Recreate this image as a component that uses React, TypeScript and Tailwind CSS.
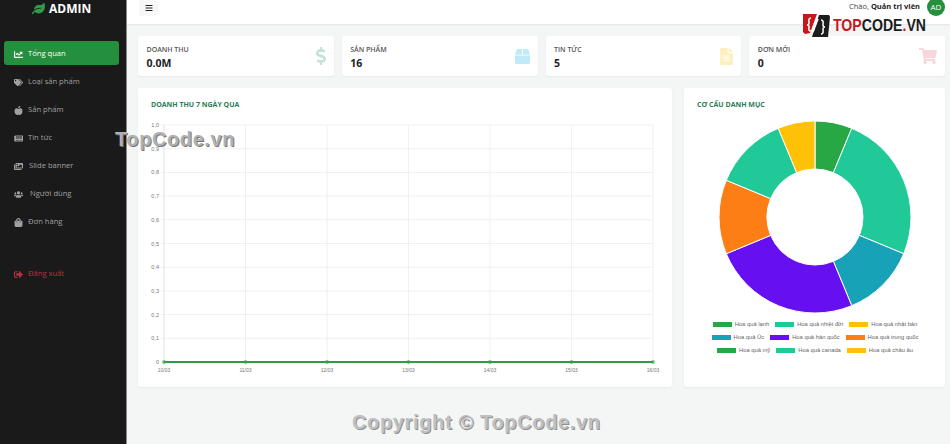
import {
  FaAppleAlt,
  FaBars,
  FaBox,
  FaChartLine,
  FaDollarSign,
  FaFileAlt,
  FaImages,
  FaLeaf,
  FaNewspaper,
  FaShoppingBag,
  FaShoppingCart,
  FaSignOutAlt,
  FaTags,
  FaUsers,
} from "react-icons/fa";

const navItems = [
  { label: "Tổng quan", icon: FaChartLine, active: true, gap: "gap-[5px]" },
  { label: "Loại sản phẩm", icon: FaTags, gap: "gap-[5px]" },
  { label: "Sản phẩm", icon: FaAppleAlt, gap: "gap-[5px]" },
  { label: "Tin tức", icon: FaNewspaper, gap: "gap-[5px]" },
  { label: "Slide banner", icon: FaImages, gap: "gap-[6px]" },
  { label: "Người dùng", icon: FaUsers, gap: "gap-[7px]" },
  { label: "Đơn hàng", icon: FaShoppingBag, gap: "gap-[5px]" },
];

const stats = [
  { label: "DOANH THU", value: "0.0M", icon: FaDollarSign, color: "text-[18px] -mr-[4px] text-[#c3e3d5]" },
  { label: "SẢN PHẨM", value: "16", icon: FaBox, color: "text-[15px] text-[#bfeaf7]" },
  { label: "TIN TỨC", value: "5", icon: FaFileAlt, color: "text-[17px] -mr-[2px] text-[#fdf0c0]" },
  { label: "ĐƠN MỚI", value: "0", icon: FaShoppingCart, color: "text-[18px] text-[#fad5d9]" },
];

const slices = [
  { share: 1, color: "#28a745" },
  { share: 4, color: "#20c997" },
  { share: 2, color: "#17a2b8" },
  { share: 4, color: "#6610f2" },
  { share: 2, color: "#fd7e14" },
  { share: 2, color: "#20c997" },
  { share: 1, color: "#ffc107" },
];

const legend = [
  [
    { label: "Hoa quả lạnh", color: "bg-[#28a745]" },
    { label: "Hoa quả nhiệt đới", color: "bg-[#20c997]" },
    { label: "Hoa quả nhật bản", color: "bg-[#ffc107]" },
  ],
  [
    { label: "Hoa quả Úc", color: "bg-[#17a2b8]" },
    { label: "Hoa quả hàn quốc", color: "bg-[#6610f2]" },
    { label: "Hoa quả trung quốc", color: "bg-[#fd7e14]" },
  ],
  [
    { label: "Hoa quả mỹ", color: "bg-[#28a745]" },
    { label: "Hoa quả canada", color: "bg-[#20c997]" },
    { label: "Hoa quả châu âu", color: "bg-[#ffc107]" },
  ],
];

const days = ["10/03", "11/03", "12/03", "13/03", "14/03", "15/03", "16/03"];
const ticks = ["1,0", "0,9", "0,8", "0,7", "0,6", "0,5", "0,4", "0,3", "0,2", "0,1", "0"];

function LineChart() {
  const left = 26;
  const right = 515;
  const top = 7;
  const bottom = 244;
  const stepX = (right - left) / 6;
  const stepY = (bottom - top) / 10;

  return (
    <svg width="534" height="262" className="block font-['Liberation_Sans',sans-serif]">
      {ticks.map((tick, i) => (
        <g key={tick}>
          <line x1={left - 3} x2={right} y1={top + i * stepY} y2={top + i * stepY} stroke="#f0f0f0" />
          <text x={left - 5} y={top + i * stepY + 2} textAnchor="end" fontSize="5.5" fill="#777">
            {tick}
          </text>
        </g>
      ))}
      {days.map((day, i) => (
        <g key={day}>
          <line
            x1={left + i * stepX}
            x2={left + i * stepX}
            y1={top}
            y2={bottom + 3}
            stroke={i === 0 ? "#e2e2e2" : "#f0f0f0"}
          />
          <text x={left + i * stepX} y={bottom + 10} textAnchor="middle" fontSize="5" fill="#777">
            {day}
          </text>
        </g>
      ))}
      <line x1={left} x2={right} y1={bottom} y2={bottom} stroke="#2f9a4a" strokeWidth="2" />
      {days.map((day, i) => (
        <circle key={day} cx={left + i * stepX} cy={bottom} r="2" fill="#28a745" opacity="0.6" />
      ))}
    </svg>
  );
}

function Donut() {
  const total = slices.reduce((sum, s) => sum + s.share, 0);
  const cx = 97;
  const cy = 97;
  const outer = 96;
  const inner = 48;
  let angle = 0;

  const point = (r: number, deg: number) => {
    const rad = ((deg - 90) * Math.PI) / 180;
    return `${cx + r * Math.cos(rad)} ${cy + r * Math.sin(rad)}`;
  };

  return (
    <svg width="194" height="194" className="block">
      {slices.map((slice, i) => {
        const start = angle;
        const end = angle + (slice.share / total) * 360;
        angle = end;
        const large = end - start > 180 ? 1 : 0;
        const d = `M ${point(outer, start)} A ${outer} ${outer} 0 ${large} 1 ${point(outer, end)} L ${point(inner, end)} A ${inner} ${inner} 0 ${large} 0 ${point(inner, start)} Z`;
        return <path key={i} d={d} fill={slice.color} stroke="#fff" strokeWidth="1" />;
      })}
    </svg>
  );
}

function LogoMark() {
  return (
    <svg width="27" height="24" viewBox="0 0 27 24" className="shrink-0">
      <polygon points="0,1 14,1 7,20 2,21 0,19" fill="#c8161d" />
      <polygon points="16,2 26,2 27,4 25,24 9,24" fill="#1c1c1c" />
      <path d="M8 5 C5 5 6 8 6 10 C6 11 5 12 4 12 C5 12 6 13 6 14 C6 16 5 18 8 18" fill="none" stroke="#fff" strokeWidth="1.5" />
      <path d="M15 6 L10 19" fill="none" stroke="#fff" strokeWidth="1.5" />
      <path d="M18 7 C21 7 20 10 20 12 C20 13 21 14 22 14 C21 14 20 15 20 16 C20 18 21 21 18 21" fill="none" stroke="#fff" strokeWidth="1.5" />
    </svg>
  );
}

export default function App() {
  return (
    <div className="relative flex h-[444px] w-[950px] overflow-hidden bg-[#f4f6f6] font-['Open_Sans',sans-serif]">
      {/* Sidebar */}
      <aside className="w-[127px] shrink-0 border-r border-[#8a8a8a] bg-[#1a1a1a]">
        <div className="flex h-[17px] items-center pl-[32px] gap-[4px]">
          <FaLeaf className="text-[13px] text-[#2f9a4a]" />
          <span className="text-[12px] font-bold leading-none text-white">ADMIN</span>
        </div>
        <nav className="mt-[24px] flex flex-col gap-[4px] pl-[4px] pr-[7px]">
          {navItems.map((item) => {
            const Icon = item.icon;
            return (
              <a
                key={item.label}
                className={`flex h-[24px] items-center rounded-[3px] pl-[10px] pt-[2px] text-[7.6px] ${item.gap} ${
                  item.active ? "bg-[#248f3c] text-white" : "text-[#a0a0a0]"
                }`}
              >
                <Icon className="shrink-0 text-[9px]" />
                {item.label}
              </a>
            );
          })}
          <a className="mt-[24px] flex h-[24px] items-center gap-[5px] pl-[10px] pt-[2px] text-[7.6px] text-[#b8303f]">
            <FaSignOutAlt className="shrink-0 text-[9px]" />
            Đăng xuất
          </a>
        </nav>
      </aside>

      {/* Main */}
      <div className="flex min-w-0 flex-1 flex-col">
        <header className="flex h-[24px] shrink-0 items-start justify-between bg-white pl-[12px] pr-[5px] shadow-[0_1px_2px_rgba(0,0,0,0.08)]">
          <button className="flex h-[16px] w-[19px] items-center justify-center rounded-[3px] bg-[#f7f7f7] text-[#222]">
            <FaBars className="text-[8px]" />
          </button>
          <div className="flex h-[14px] items-center gap-[7px] text-[7.5px] text-[#444]">
            <span>
              Chào, <b className="font-bold text-[#222]">Quản trị viên</b>
            </span>
            <span className="flex h-[18px] w-[18px] items-center justify-center rounded-full bg-[#248f3c] text-[8px] text-white">
              AD
            </span>
          </div>
        </header>

        <main className="flex flex-col gap-[12px] pl-[11px] pr-[5px] pt-[12px]">
          <section className="grid grid-cols-4 gap-[8px]">
            {stats.map((stat) => {
              const Icon = stat.icon;
              return (
                <div
                  key={stat.label}
                  className="flex h-[40px] items-center justify-between rounded-[3px] bg-white pl-[8px] pr-[8px] shadow-[0_1px_2px_rgba(0,0,0,0.05)]"
                >
                  <div className="pl-[0.5px] pt-[2px]">
                    <div className="text-[7px] font-semibold leading-[11px] text-[#555]">{stat.label}</div>
                    <div className="mt-[1px] text-[10.5px] font-bold leading-[14px] text-[#222]">{stat.value}</div>
                  </div>
                  <Icon className={stat.color} />
                </div>
              );
            })}
          </section>

          <section className="flex gap-[12px]">
            <div className="h-[299px] w-[534px] rounded-[3px] bg-white shadow-[0_1px_2px_rgba(0,0,0,0.05)]">
              <h3 className="pl-[13px] pt-[12px] text-[7px] font-bold leading-[10px] text-[#2b7d58]">
                DOANH THU 7 NGÀY QUA
              </h3>
              <div className="mt-[8px]">
                <LineChart />
              </div>
            </div>
            <div className="flex h-[299px] w-[261px] flex-col rounded-[3px] bg-white shadow-[0_1px_2px_rgba(0,0,0,0.05)]">
              <h3 className="pl-[13px] pt-[12px] text-[7px] font-bold leading-[10px] text-[#2b7d58]">
                CƠ CẤU DANH MỤC
              </h3>
              <div className="mt-[10px] flex justify-center">
                <Donut />
              </div>
              <div className="mt-[5px] flex flex-col gap-[3px] pl-[1px] font-['Liberation_Sans',sans-serif]">
                {legend.map((row, i) => (
                  <div key={i} className="flex h-[10px] items-center justify-center gap-[6px]">
                    {row.map((entry) => (
                      <div key={entry.label} className="flex items-center gap-[3px] text-[5.8px] text-[#666]">
                        <span className={`h-[5px] w-[19px] ${entry.color}`} />
                        {entry.label}
                      </div>
                    ))}
                  </div>
                ))}
              </div>
            </div>
          </section>
        </main>
      </div>

      {/* Watermarks stamped over the page */}
      <div className="pointer-events-none absolute left-[115px] top-[126px] font-['Liberation_Sans',sans-serif] text-[20px] font-bold leading-[26px] tracking-[0.6px] text-[#b0b0b0] [text-shadow:1px_1px_0_#777]">
        TopCode.vn
      </div>
      <div className="pointer-events-none absolute left-[352px] top-[409px] font-['Liberation_Sans',sans-serif] text-[20px] font-bold leading-[26px] tracking-[0.65px] text-[#c0c0c0] [text-shadow:1px_1px_0_#909090]">
        Copyright © TopCode.vn
      </div>
      <div className="pointer-events-none absolute left-[803px] top-[13px] flex items-center gap-[3px]">
        <LogoMark />
        <span className="origin-left scale-x-[0.83] font-['Liberation_Sans',sans-serif] text-[17px] font-bold leading-none text-[#1c1c1c]">
          <span className="text-[#c8161d]">TOP</span>CODE<span className="text-[#c8161d]">.</span>VN
        </span>
      </div>
    </div>
  );
}
